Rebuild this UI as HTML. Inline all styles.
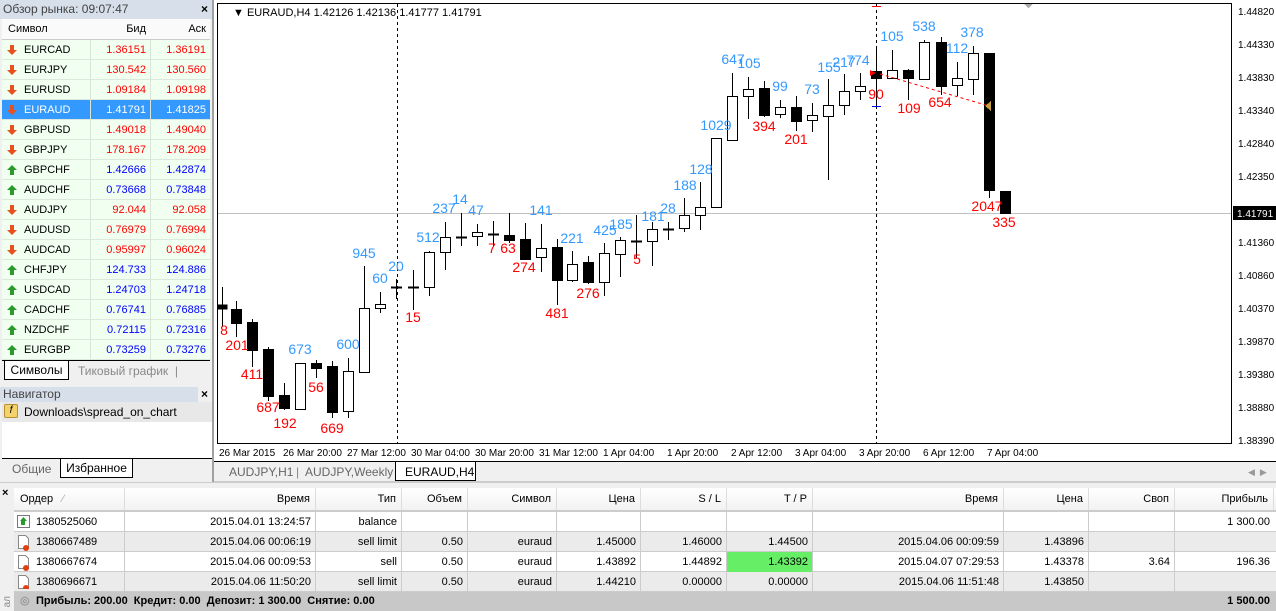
<!DOCTYPE html>
<html><head><meta charset="utf-8"><style>
*{margin:0;padding:0;box-sizing:border-box}
body{width:1276px;height:611px;overflow:hidden;background:#f0f0f0;font-family:"Liberation Sans",Arial,sans-serif;font-size:11px;color:#000;position:relative}
.a{position:absolute}
.mw div.r{position:absolute;left:2px;width:208px;height:20px;line-height:20px;background:#f0fff0;border-bottom:1px solid #dde8dd}
.r span{position:absolute;top:0}
.r .s{left:22px}.r .b{right:64px;text-align:right}.r .k{right:4px;text-align:right}
.red{color:#f00}.blu{color:#00f}
.ic{position:absolute;left:5px;top:5px;width:10px;height:10px}
.th{position:absolute;top:0;height:22px;line-height:22px;text-align:right;padding-right:5px;border-right:1px solid #ddd}
.tr{position:absolute;left:14px;width:1262px;height:20px;border-bottom:1px solid #ccc}
.tr span{position:absolute;top:0;line-height:20px;text-align:right;border-right:1px solid #ccc;height:20px;padding-right:4px}
</style></head><body>
<!-- market watch -->
<div class="a" style="left:0;top:0;width:213px;height:19px;background:#d6dfea;color:#444;font-size:12px;line-height:18px;padding-left:3px">Обзор рынка: 09:07:47</div>
<div class="a" style="left:201px;top:2px;font-weight:bold;font-size:12px">×</div>
<div class="a" style="left:2px;top:19px;width:208px;height:21px;background:#fafafa;border-bottom:1px solid #ccc;font-size:11px;line-height:21px">
<span class="a" style="left:6px">Символ</span><span class="a" style="right:64px">Бид</span><span class="a" style="right:4px">Аск</span></div>
<div class="mw" style="position:absolute;left:0;top:40px">
<div class="r" style="top:0"><svg class="ic" viewBox="0 0 10 10"><path d="M3 0h4v5h3L5 10 0 5h3z" fill="#e8501e"/></svg><span class="s">EURCAD</span><span class="b red">1.36151</span><span class="k red">1.36191</span></div>
<div class="r" style="top:20px"><svg class="ic" viewBox="0 0 10 10"><path d="M3 0h4v5h3L5 10 0 5h3z" fill="#e8501e"/></svg><span class="s">EURJPY</span><span class="b red">130.542</span><span class="k red">130.560</span></div>
<div class="r" style="top:40px"><svg class="ic" viewBox="0 0 10 10"><path d="M3 0h4v5h3L5 10 0 5h3z" fill="#e8501e"/></svg><span class="s">EURUSD</span><span class="b red">1.09184</span><span class="k red">1.09198</span></div>
<div class="r" style="top:60px;background:#3399ff;color:#fff"><svg class="ic" viewBox="0 0 10 10"><path d="M3 0h4v5h3L5 10 0 5h3z" fill="#e8501e"/></svg><span class="s">EURAUD</span><span class="b">1.41791</span><span class="k">1.41825</span></div>
<div class="r" style="top:80px"><svg class="ic" viewBox="0 0 10 10"><path d="M3 0h4v5h3L5 10 0 5h3z" fill="#e8501e"/></svg><span class="s">GBPUSD</span><span class="b red">1.49018</span><span class="k red">1.49040</span></div>
<div class="r" style="top:100px"><svg class="ic" viewBox="0 0 10 10"><path d="M3 0h4v5h3L5 10 0 5h3z" fill="#e8501e"/></svg><span class="s">GBPJPY</span><span class="b red">178.167</span><span class="k red">178.209</span></div>
<div class="r" style="top:120px"><svg class="ic" viewBox="0 0 10 10"><path d="M3 10h4V5h3L5 0 0 5h3z" fill="#2a9a2a"/></svg><span class="s">GBPCHF</span><span class="b blu">1.42666</span><span class="k blu">1.42874</span></div>
<div class="r" style="top:140px"><svg class="ic" viewBox="0 0 10 10"><path d="M3 10h4V5h3L5 0 0 5h3z" fill="#2a9a2a"/></svg><span class="s">AUDCHF</span><span class="b blu">0.73668</span><span class="k blu">0.73848</span></div>
<div class="r" style="top:160px"><svg class="ic" viewBox="0 0 10 10"><path d="M3 0h4v5h3L5 10 0 5h3z" fill="#e8501e"/></svg><span class="s">AUDJPY</span><span class="b red">92.044</span><span class="k red">92.058</span></div>
<div class="r" style="top:180px"><svg class="ic" viewBox="0 0 10 10"><path d="M3 0h4v5h3L5 10 0 5h3z" fill="#e8501e"/></svg><span class="s">AUDUSD</span><span class="b red">0.76979</span><span class="k red">0.76994</span></div>
<div class="r" style="top:200px"><svg class="ic" viewBox="0 0 10 10"><path d="M3 0h4v5h3L5 10 0 5h3z" fill="#e8501e"/></svg><span class="s">AUDCAD</span><span class="b red">0.95997</span><span class="k red">0.96024</span></div>
<div class="r" style="top:220px"><svg class="ic" viewBox="0 0 10 10"><path d="M3 10h4V5h3L5 0 0 5h3z" fill="#2a9a2a"/></svg><span class="s">CHFJPY</span><span class="b blu">124.733</span><span class="k blu">124.886</span></div>
<div class="r" style="top:240px"><svg class="ic" viewBox="0 0 10 10"><path d="M3 10h4V5h3L5 0 0 5h3z" fill="#2a9a2a"/></svg><span class="s">USDCAD</span><span class="b blu">1.24703</span><span class="k blu">1.24718</span></div>
<div class="r" style="top:260px"><svg class="ic" viewBox="0 0 10 10"><path d="M3 10h4V5h3L5 0 0 5h3z" fill="#2a9a2a"/></svg><span class="s">CADCHF</span><span class="b blu">0.76741</span><span class="k blu">0.76885</span></div>
<div class="r" style="top:280px"><svg class="ic" viewBox="0 0 10 10"><path d="M3 10h4V5h3L5 0 0 5h3z" fill="#2a9a2a"/></svg><span class="s">NZDCHF</span><span class="b blu">0.72115</span><span class="k blu">0.72316</span></div>
<div class="r" style="top:300px"><svg class="ic" viewBox="0 0 10 10"><path d="M3 10h4V5h3L5 0 0 5h3z" fill="#2a9a2a"/></svg><span class="s">EURGBP</span><span class="b blu">0.73259</span><span class="k blu">0.73276</span></div>
</div>
<div class="a" style="left:90px;top:40px;width:1px;height:320px;background:#d8e4d8"></div>
<div class="a" style="left:150px;top:40px;width:1px;height:320px;background:#d8e4d8"></div>
<div class="a" style="left:2px;top:360px;width:208px;height:1px;background:#000"></div>
<div class="a" style="left:4px;top:361px;width:65px;height:19px;background:#fff;border:1px solid #000;border-top:none;font-size:12px;line-height:18px;text-align:center">Символы</div>
<div class="a" style="left:78px;top:364px;color:#888;font-size:12px">Тиковый график &nbsp;|</div>
<!-- navigator -->
<div class="a" style="left:0;top:387px;width:198px;height:15px;background:#d6dfea;color:#444;font-size:12px;line-height:15px;padding-left:3px">Навигатор</div>
<div class="a" style="left:201px;top:387px;font-weight:bold;font-size:12px">×</div>
<div class="a" style="left:2px;top:402px;width:210px;height:56px;background:#fff"></div>
<div class="a" style="left:2px;top:402px;width:210px;height:20px;background:#e8e8e8;font-size:12px;line-height:20px;padding-left:22px">Downloads\spread_on_chart</div>
<div class="a" style="left:4px;top:404px;width:14px;height:14px;background:#f3d36a;border:1px solid #b89030;border-radius:2px;font-size:10px;font-style:italic;line-height:12px;text-align:center">f</div>
<div class="a" style="left:2px;top:458px;width:210px;height:1px;background:#000"></div>
<div class="a" style="left:12px;top:462px;color:#666;font-size:12px">Общие</div>
<div class="a" style="left:60px;top:459px;width:73px;height:19px;background:#fff;border:1px solid #000;border-top:none;font-size:12px;line-height:18px;text-align:center">Избранное</div>
<!-- chart -->
<svg class="a" style="left:214px;top:0" width="1062" height="482" viewBox="214 0 1062 482" shape-rendering="crispEdges">
<rect x="214" y="0" width="1062" height="482" fill="#fff"/>
<rect x="217.5" y="3.5" width="1014" height="440" fill="#fff" stroke="#000"/>
<line x1="218" y1="213.5" x2="1231" y2="213.5" stroke="#c0c0c0"/>
<line x1="397.5" y1="4" x2="397.5" y2="443" stroke="#000" stroke-dasharray="3,3"/>
<line x1="876.5" y1="4" x2="876.5" y2="443" stroke="#000" stroke-dasharray="3,3"/>
<path d="M1024 4h9l-4.5 4z" fill="#aaa"/>
<g stroke="#000" fill="none" font-family="Liberation Sans,Arial,sans-serif">
<g id="c">
<line x1="222.5" y1="287" x2="222.5" y2="327"/><rect x="218" y="305" width="9" height="4" fill="#000"/>
<line x1="236.5" y1="301" x2="236.5" y2="337"/><rect x="231.5" y="309.5" width="10" height="14" fill="#000"/>
<line x1="252.5" y1="319" x2="252.5" y2="367"/><rect x="247.5" y="322.5" width="10" height="28" fill="#000"/>
<line x1="268.5" y1="347" x2="268.5" y2="401"/><rect x="263.5" y="349.5" width="10" height="47" fill="#000"/>
<line x1="284.5" y1="383" x2="284.5" y2="410"/><rect x="279.5" y="395.5" width="10" height="13" fill="#000"/>
<rect x="295.5" y="363.5" width="10" height="46" fill="#fff"/>
<line x1="316.5" y1="360" x2="316.5" y2="378"/><rect x="311.5" y="363.5" width="10" height="5" fill="#000"/>
<line x1="332.5" y1="361" x2="332.5" y2="418"/><rect x="327.5" y="366.5" width="10" height="46" fill="#000"/>
<line x1="348.5" y1="358" x2="348.5" y2="418"/><rect x="343.5" y="371.5" width="10" height="40" fill="#fff"/>
<line x1="364.5" y1="266" x2="364.5" y2="373"/><rect x="359.5" y="308.5" width="10" height="64" fill="#fff"/>
<line x1="380.5" y1="292" x2="380.5" y2="313"/><rect x="375.5" y="304.5" width="10" height="4" fill="#fff"/>
<line x1="396.5" y1="279" x2="396.5" y2="299"/><line x1="391" y1="287.5" x2="402" y2="287.5" stroke-width="2"/>
<line x1="413.5" y1="270" x2="413.5" y2="310"/><line x1="408" y1="287.5" x2="419" y2="287.5" stroke-width="2"/>
<line x1="429.5" y1="251" x2="429.5" y2="296"/><rect x="424.5" y="252.5" width="10" height="35" fill="#fff"/>
<line x1="445.5" y1="222" x2="445.5" y2="270"/><rect x="440.5" y="237.5" width="10" height="15" fill="#fff"/>
<line x1="461.5" y1="213" x2="461.5" y2="246"/><line x1="456" y1="237.5" x2="467" y2="237.5" stroke-width="2"/>
<line x1="477.5" y1="224" x2="477.5" y2="246"/><rect x="472.5" y="232.5" width="10" height="4" fill="#fff"/>
<line x1="493.5" y1="221" x2="493.5" y2="246"/><line x1="488" y1="234.5" x2="499" y2="234.5" stroke-width="2"/>
<line x1="509.5" y1="213" x2="509.5" y2="243"/><rect x="504.5" y="235.5" width="10" height="5" fill="#000"/>
<line x1="525.5" y1="223" x2="525.5" y2="259"/><rect x="520.5" y="239.5" width="10" height="20" fill="#000"/>
<line x1="541.5" y1="224" x2="541.5" y2="272"/><rect x="536.5" y="248.5" width="10" height="9" fill="#fff"/>
<line x1="557.5" y1="239" x2="557.5" y2="305"/><rect x="552.5" y="247.5" width="10" height="33" fill="#000"/>
<line x1="572.5" y1="251" x2="572.5" y2="282"/><rect x="567.5" y="264.5" width="10" height="16" fill="#fff"/>
<line x1="588.5" y1="256" x2="588.5" y2="284"/><rect x="583.5" y="262.5" width="10" height="20" fill="#000"/>
<line x1="604.5" y1="243" x2="604.5" y2="296"/><rect x="599.5" y="253.5" width="10" height="29" fill="#fff"/>
<line x1="620.5" y1="237" x2="620.5" y2="277"/><rect x="615.5" y="240.5" width="10" height="14" fill="#fff"/>
<line x1="636.5" y1="215" x2="636.5" y2="258"/><line x1="631" y1="241.5" x2="642" y2="241.5" stroke-width="2"/>
<line x1="652.5" y1="222" x2="652.5" y2="266"/><rect x="647.5" y="229.5" width="10" height="12" fill="#fff"/>
<line x1="668.5" y1="222" x2="668.5" y2="240"/><line x1="663" y1="229.5" x2="674" y2="229.5" stroke-width="2"/>
<line x1="684.5" y1="198" x2="684.5" y2="232"/><rect x="679.5" y="215.5" width="10" height="13" fill="#fff"/>
<line x1="700.5" y1="182" x2="700.5" y2="230"/><rect x="695.5" y="207.5" width="10" height="8" fill="#fff"/>
<line x1="716.5" y1="138" x2="716.5" y2="208"/><rect x="711.5" y="138.5" width="10" height="69" fill="#fff"/>
<line x1="732.5" y1="73" x2="732.5" y2="141"/><rect x="727.5" y="96.5" width="10" height="44" fill="#fff"/>
<line x1="748.5" y1="77" x2="748.5" y2="119"/><rect x="743.5" y="89.5" width="10" height="7" fill="#fff"/>
<line x1="764.5" y1="81" x2="764.5" y2="117"/><rect x="759.5" y="88.5" width="10" height="27" fill="#000"/>
<line x1="780.5" y1="100" x2="780.5" y2="118"/><rect x="775.5" y="107.5" width="10" height="7" fill="#fff"/>
<line x1="796.5" y1="96" x2="796.5" y2="131"/><rect x="791.5" y="107.5" width="10" height="14" fill="#000"/>
<line x1="812.5" y1="103" x2="812.5" y2="132"/><rect x="807.5" y="115.5" width="10" height="5" fill="#fff"/>
<line x1="828.5" y1="79" x2="828.5" y2="180"/><rect x="823.5" y="105.5" width="10" height="11" fill="#fff"/>
<line x1="844.5" y1="74" x2="844.5" y2="115"/><rect x="839.5" y="91.5" width="10" height="14" fill="#fff"/>
<line x1="860.5" y1="73" x2="860.5" y2="100"/><rect x="855.5" y="86.5" width="10" height="5" fill="#fff"/>
<line x1="876.5" y1="49" x2="876.5" y2="106"/><rect x="871.5" y="71.5" width="10" height="7" fill="#000"/>
<line x1="892.5" y1="50" x2="892.5" y2="78"/><rect x="887.5" y="70.5" width="10" height="8" fill="#fff"/>
<line x1="908.5" y1="69" x2="908.5" y2="100"/><rect x="903.5" y="70.5" width="10" height="8" fill="#000"/>
<line x1="924.5" y1="40" x2="924.5" y2="80"/><rect x="919.5" y="42.5" width="10" height="37" fill="#fff"/>
<line x1="941.5" y1="37" x2="941.5" y2="95"/><rect x="936.5" y="42.5" width="10" height="44" fill="#000"/>
<line x1="957.5" y1="62" x2="957.5" y2="96"/><rect x="952.5" y="78.5" width="10" height="7" fill="#fff"/>
<line x1="973.5" y1="46" x2="973.5" y2="95"/><rect x="968.5" y="53.5" width="10" height="26" fill="#fff"/>
<line x1="989.5" y1="53" x2="989.5" y2="198"/><rect x="984.5" y="53.5" width="10" height="137" fill="#000"/>
<rect x="1000.5" y="191.5" width="10" height="22" fill="#000"/>
</g>
<line x1="880" y1="74" x2="989" y2="106" stroke="#f00" stroke-dasharray="3,3" shape-rendering="auto"/>
<path d="M870 70l6 3-6 3z" fill="#f00" stroke="none"/>
<path d="M985 106l6-5v10z" fill="#c8a040" stroke="none"/>
<line x1="872" y1="6.5" x2="881" y2="6.5" stroke="#f00"/>
<line x1="872" y1="106.5" x2="881" y2="106.5" stroke="#00f"/>
<g stroke="none" font-size="14" text-anchor="middle" fill="#3399ff">
<text x="364" y="258">945</text><text x="380" y="283">60</text><text x="396" y="271">20</text><text x="428" y="242">512</text><text x="444" y="213">237</text><text x="460" y="204">14</text><text x="476" y="215">47</text><text x="541" y="215">141</text><text x="572" y="243">221</text><text x="605" y="235">425</text><text x="621" y="229">185</text><text x="653" y="221">181</text><text x="668" y="213">28</text><text x="685" y="190">188</text><text x="701" y="174">128</text><text x="716" y="130">1029</text><text x="733" y="64">647</text><text x="749" y="68">105</text><text x="780" y="91">99</text><text x="812" y="94">73</text><text x="829" y="72">155</text><text x="844" y="67">217</text><text x="858" y="65">774</text><text x="892" y="41">105</text><text x="924" y="31">538</text><text x="957" y="53">112</text><text x="972" y="37">378</text><text x="300" y="354">673</text><text x="348" y="349">600</text>
</g>
<g stroke="none" font-size="14" text-anchor="middle" fill="#f00">
<text x="224" y="335">8</text><text x="237" y="350">201</text><text x="252" y="379">411</text><text x="268" y="412">687</text><text x="285" y="428">192</text><text x="316" y="392">56</text><text x="332" y="433">669</text><text x="413" y="322">15</text><text x="492" y="253">7</text><text x="508" y="253">63</text><text x="524" y="272">274</text><text x="557" y="318">481</text><text x="588" y="298">276</text><text x="637" y="264">5</text><text x="764" y="131">394</text><text x="796" y="144">201</text><text x="876" y="99">90</text><text x="909" y="113">109</text><text x="940" y="107">654</text><text x="987" y="211">2047</text><text x="1004" y="227">335</text>
</g>
<g stroke="none" font-size="10" fill="#000">
<text x="1238" y="15">1.44820</text><text x="1238" y="48">1.44330</text><text x="1238" y="81">1.43830</text><text x="1238" y="114">1.43340</text><text x="1238" y="147">1.42840</text><text x="1238" y="180">1.42350</text><text x="1238" y="246">1.41360</text><text x="1238" y="279">1.40860</text><text x="1238" y="312">1.40370</text><text x="1238" y="345">1.39870</text><text x="1238" y="378">1.39380</text><text x="1238" y="411">1.38880</text><text x="1238" y="444">1.38390</text>
</g>
<rect x="1233" y="206" width="43" height="14" fill="#000" stroke="none"/>
<text x="1237" y="217" font-size="10" fill="#fff" stroke="none">1.41791</text>
<g stroke="none" font-size="10" fill="#000">
<text x="219" y="456">26 Mar 2015</text><text x="283" y="456">26 Mar 20:00</text><text x="347" y="456">27 Mar 12:00</text><text x="411" y="456">30 Mar 04:00</text><text x="475" y="456">30 Mar 20:00</text><text x="539" y="456">31 Mar 12:00</text><text x="603" y="456">1 Apr 04:00</text><text x="667" y="456">1 Apr 20:00</text><text x="731" y="456">2 Apr 12:00</text><text x="795" y="456">3 Apr 04:00</text><text x="859" y="456">3 Apr 20:00</text><text x="923" y="456">6 Apr 12:00</text><text x="987" y="456">7 Apr 04:00</text>
<text x="233" y="16" font-size="11">▼ EURAUD,H4  1.42126 1.42136 1.41777 1.41791</text>
</g>
</g>
<rect x="214" y="461" width="1062" height="21" fill="#f0f0f0"/>
<line x1="214" y1="461.5" x2="1276" y2="461.5" stroke="#000"/>
<rect x="395.5" y="461.5" width="80" height="19" fill="#fff" stroke="#000"/>
<line x1="214" y1="481.5" x2="1276" y2="481.5" stroke="#ccc"/>
<g font-family="Liberation Sans,Arial,sans-serif" font-size="12">
<text x="229" y="476" fill="#666">AUDJPY,H1</text><text x="296" y="476" fill="#888">|</text><text x="305" y="476" fill="#666">AUDJPY,Weekly</text><text x="405" y="476" fill="#000">EURAUD,H4</text>
<text x="1248" y="475" fill="#999" font-size="9">◀ &nbsp;▶</text></g>
</svg>
<div class="a" style="left:212px;top:0;width:2px;height:482px;background:#a0a0a0"></div>
<!-- terminal -->
<div class="a" style="left:0;top:482px;width:1276px;height:5px;background:#f0f0f0;border-top:1px solid #ccc"></div>
<div class="a" style="left:0;top:487px;width:14px;height:124px;background:#f0f0f0"></div>
<div class="a" style="left:2px;top:487px;font-weight:bold;font-size:11px">×</div>
<div class="a" style="left:2px;top:596px;color:#888;font-size:10px;writing-mode:vertical-rl;transform:rotate(180deg)">ал</div>
<div class="a" style="left:14px;top:488px;width:1262px;height:24px;background:linear-gradient(#fff,#f2f2f2);border-bottom:2px solid #ccc">
<span class="th" style="left:0;width:111px;text-align:left;padding-left:6px">Ордер &nbsp;&nbsp;<span style="color:#aaa">⁄</span></span>
<span class="th" style="left:111px;width:191px">Время</span><span class="th" style="left:302px;width:86px">Тип</span><span class="th" style="left:388px;width:66px">Объем</span><span class="th" style="left:454px;width:89px">Символ</span><span class="th" style="left:543px;width:84px">Цена</span><span class="th" style="left:627px;width:86px">S / L</span><span class="th" style="left:713px;width:86px">T / P</span><span class="th" style="left:799px;width:191px">Время</span><span class="th" style="left:990px;width:85px">Цена</span><span class="th" style="left:1075px;width:86px">Своп</span><span class="th" style="left:1161px;width:99px">Прибыль</span></div>
<div class="tr" style="top:512px;background:#fff"><span style="left:0;width:111px;text-align:left;padding-left:22px">1380525060</span><span style="left:111px;width:191px">2015.04.01 13:24:57</span><span style="left:302px;width:86px">balance</span><span style="left:388px;width:66px"></span><span style="left:454px;width:89px"></span><span style="left:543px;width:84px"></span><span style="left:627px;width:86px"></span><span style="left:713px;width:86px"></span><span style="left:799px;width:191px"></span><span style="left:990px;width:85px"></span><span style="left:1075px;width:86px"></span><span style="left:1161px;width:99px;border:none">1 300.00</span></div>
<div class="tr" style="top:532px;background:#ebebeb"><span style="left:0;width:111px;text-align:left;padding-left:22px">1380667489</span><span style="left:111px;width:191px">2015.04.06 00:06:19</span><span style="left:302px;width:86px">sell limit</span><span style="left:388px;width:66px">0.50</span><span style="left:454px;width:89px">euraud</span><span style="left:543px;width:84px">1.45000</span><span style="left:627px;width:86px">1.46000</span><span style="left:713px;width:86px">1.44500</span><span style="left:799px;width:191px">2015.04.06 00:09:59</span><span style="left:990px;width:85px">1.43896</span><span style="left:1075px;width:86px"></span><span style="left:1161px;width:99px;border:none"></span></div>
<div class="tr" style="top:552px;background:#fff"><span style="left:0;width:111px;text-align:left;padding-left:22px">1380667674</span><span style="left:111px;width:191px">2015.04.06 00:09:53</span><span style="left:302px;width:86px">sell</span><span style="left:388px;width:66px">0.50</span><span style="left:454px;width:89px">euraud</span><span style="left:543px;width:84px">1.43892</span><span style="left:627px;width:86px">1.44892</span><span style="left:713px;width:86px;background:#66ee66">1.43392</span><span style="left:799px;width:191px">2015.04.07 07:29:53</span><span style="left:990px;width:85px">1.43378</span><span style="left:1075px;width:86px">3.64</span><span style="left:1161px;width:99px;border:none">196.36</span></div>
<div class="tr" style="top:572px;background:#ebebeb"><span style="left:0;width:111px;text-align:left;padding-left:22px">1380696671</span><span style="left:111px;width:191px">2015.04.06 11:50:20</span><span style="left:302px;width:86px">sell limit</span><span style="left:388px;width:66px">0.50</span><span style="left:454px;width:89px">euraud</span><span style="left:543px;width:84px">1.44210</span><span style="left:627px;width:86px">0.00000</span><span style="left:713px;width:86px">0.00000</span><span style="left:799px;width:191px">2015.04.06 11:51:48</span><span style="left:990px;width:85px">1.43850</span><span style="left:1075px;width:86px"></span><span style="left:1161px;width:99px;border:none"></span></div>
<svg class="a" style="left:17px;top:515px" width="13" height="74" viewBox="0 0 13 74">
<rect x="0.5" y="0.5" width="12" height="12" fill="#fff" stroke="#777"/><path d="M4 10h4V6h2L6.5 2 3 6h1z" fill="#2a9a2a"/>
<g fill="#fff" stroke="#888"><path d="M1.5 20.5h7l3 3v10h-10z"/><path d="M1.5 40.5h7l3 3v10h-10z"/><path d="M1.5 60.5h7l3 3v10h-10z"/></g>
<g fill="#e04010"><circle cx="9" cy="33" r="3"/><circle cx="9" cy="53" r="3"/><circle cx="9" cy="73" r="3"/></g></svg>
<div class="a" style="left:14px;top:592px;width:1262px;height:19px;background:#c8c8c8;font-weight:bold;line-height:19px;font-size:11px">
<span class="a" style="left:6px;color:#999">◎</span><span class="a" style="left:22px">Прибыль: 200.00 &nbsp;Кредит: 0.00 &nbsp;Депозит: 1 300.00 &nbsp;Снятие: 0.00</span><span class="a" style="right:6px">1 500.00</span></div>
</body></html>
